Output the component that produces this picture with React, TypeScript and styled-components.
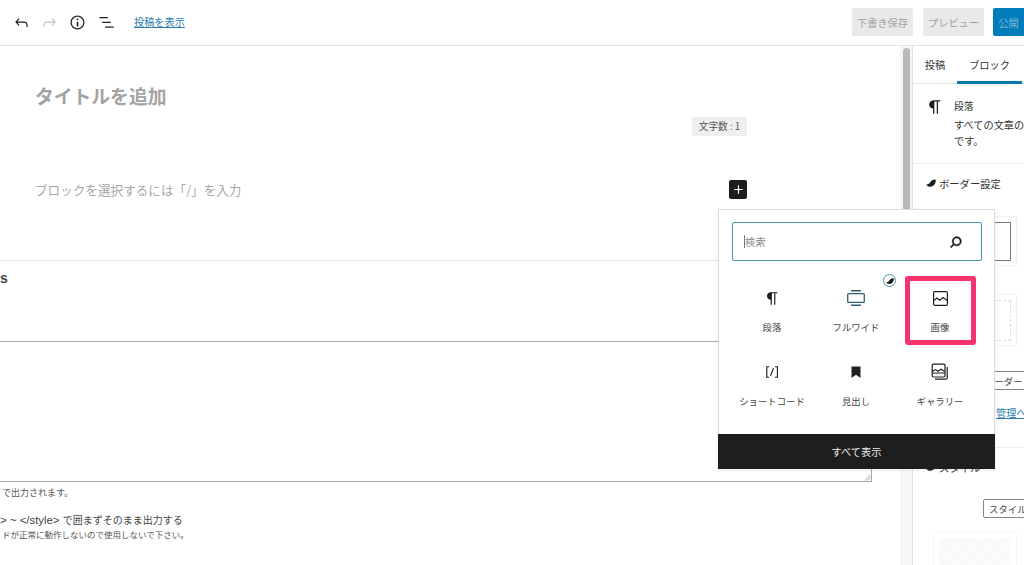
import React from "react";
import styled, { createGlobalStyle } from "styled-components";

const Global = createGlobalStyle`
  html, body { margin: 0; padding: 0; width: 1024px; height: 565px; overflow: hidden; background: #fff; }
  *, *::before, *::after { box-sizing: border-box; }
  body { font-family: "Noto Sans CJK JP", "Liberation Sans", sans-serif; color: #1e1e1e; }
`;

const Page = styled.div`
  position: relative;
  width: 1024px;
  height: 565px;
  overflow: hidden;
  display: flex;
  flex-direction: column;
`;

const Header = styled.header`
  flex: 0 0 46px;
  display: flex;
  align-items: center;
  border-bottom: 1px solid #e2e2e2;
  padding: 0 0 1px 7px;
`;
const IconSlot = styled.span<{ $faded?: boolean }>`
  width: 28.4px;
  height: 28px;
  display: flex;
  align-items: center;
  justify-content: center;
  color: ${(p) => (p.$faded ? "#c4c4c4" : "#1e1e1e")};
`;
const ViewLink = styled.a`
  margin: -2px 0 0 13.4px;
  font-size: 10.2px;
  color: #2b7cac;
  text-decoration: underline;
  flex: 1;
`;
const DraftButton = styled.span`
  width: 61px;
  height: 28px;
  margin-left: 10px;
  display: flex;
  align-items: center;
  justify-content: center;
  background: #e9e9e9;
  color: #a2a2a2;
  font-size: 10.2px;
  border-radius: 2px;
`;
const PublishButton = styled.span`
  flex: none;
  width: 61px;
  height: 28px;
  margin: 0 -30px 0 9px;
  padding-right: 30px;
  display: flex;
  align-items: center;
  justify-content: center;
  background: #007cba;
  color: #7fb6d6;
  font-size: 10.2px;
  border-radius: 2px;
`;

const Body = styled.div`
  flex: 1;
  display: flex;
  min-height: 0;
`;
const Editor = styled.main`
  width: 900px;
  flex: none;
  display: flex;
  flex-direction: column;
`;
const Canvas = styled.div`
  height: 215px;
  flex: none;
  display: flex;
  flex-direction: column;
  padding: 36px 153px 0 35px;
  border-bottom: 1px solid #e4e4e4;
`;
const PostTitle = styled.h1`
  margin: 0;
  height: 28px;
  font-size: 18.8px;
  line-height: 28px;
  font-weight: 700;
  color: #a3a3a3;
`;
const CounterRow = styled.div`
  display: flex;
  justify-content: flex-end;
  margin-top: 7px;
`;
const Counter = styled.span`
  width: 55px;
  height: 19px;
  background: #efefef;
  color: #555;
  font-size: 9.7px;
  line-height: 19px;
  text-align: center;
`;
const PlaceholderRow = styled.div`
  display: flex;
  align-items: center;
  justify-content: space-between;
  margin-top: 44px;
  height: 19px;
`;
const Placeholder = styled.span`
  font-size: 12.6px;
  color: #a6a6a6;
`;
const PlusButton = styled.span`
  width: 18px;
  height: 19px;
  background: #1e1e1e;
  color: #fff;
  border-radius: 2px;
  display: flex;
  align-items: center;
  justify-content: center;
`;
const FieldBox = styled.div`
  height: 80px;
  flex: none;
  padding-top: 7px;
`;
const FieldLabel = styled.div`
  font-family: "Liberation Sans", sans-serif;
  font-size: 14px;
  line-height: 20px;
  font-weight: 700;
  color: #444;
`;
const CodeArea = styled.div`
  position: relative;
  flex: none;
  width: 875px;
  height: 141px;
  margin-left: -3px;
  border: 1px solid #a9a9a9;
  border-left: 0;
`;
const Handle = styled.svg`
  position: absolute;
  right: 0;
  bottom: 0;
`;
const HelpOne = styled.p`
  margin: 4px 0 0 2px;
  font-size: 9px;
  line-height: 13px;
  color: #555;
`;
const HelpTwo = styled.p`
  margin: 13px 0 0;
  font-size: 10px;
  line-height: 16px;
  color: #444;
  white-space: nowrap;
`;
const LatinPart = styled.span`
  font-family: "Liberation Sans", sans-serif;
  font-size: 11.4px;
`;
const HelpThree = styled.p`
  margin: 0 0 0 2px;
  font-size: 8.5px;
  line-height: 13px;
  color: #555;
  white-space: nowrap;
`;

const Track = styled.div`
  width: 12px;
  flex: none;
  background: #f6f6f6;
  padding: 2px 2px 0 3px;
`;
const Thumb = styled.div`
  height: 350px;
  background: #b9b9b9;
  border-radius: 4px;
`;

const Sidebar = styled.aside`
  flex: 1;
  min-width: 0;
  border-left: 1px solid #e0e0e0;
  overflow: hidden;
`;
const Tabs = styled.div`
  height: 38px;
  display: flex;
  border-bottom: 1px solid #e4e4e4;
`;
const Tab = styled.span<{ $active?: boolean }>`
  width: ${(p) => (p.$active ? "65px" : "44px")};
  height: 38px;
  display: flex;
  align-items: center;
  justify-content: center;
  font-size: 10.2px;
  color: #333;
  border-bottom: 3px solid ${(p) => (p.$active ? "#0a78a8" : "transparent")};
  padding-top: 1px;
`;
const BlockCard = styled.section`
  height: 80px;
  display: flex;
  padding: 12px 0 0 12px;
  border-bottom: 1px solid #eee;
`;
const BlockIcon = styled.span`
  width: 21px;
  flex: none;
  margin-top: 1px;
`;
const BlockText = styled.div`
  margin-left: 8px;
  white-space: nowrap;
`;
const BlockName = styled.div`
  font-size: 9.8px;
  line-height: 20px;
  color: #333;
`;
const BlockDescription = styled.div`
  margin-top: 1px;
  font-size: 10.2px;
  line-height: 15.5px;
  color: #333;
`;
const Panel = styled.section<{ $height: number }>`
  height: ${(p) => p.$height}px;
  border-bottom: 1px solid #eee;
  padding-top: 11px;
`;
const PanelTitle = styled.div`
  display: flex;
  align-items: center;
  gap: 3px;
  padding-left: 13px;
  height: 16px;
  font-size: 10.3px;
  color: #333;
  white-space: nowrap;
`;
const PreviewCard = styled.div`
  margin: 25px 0 0 20px;
  width: 84px;
  height: 50px;
  border: 1px solid #f0f0f0;
  padding: 5px 5px 4px 0;
`;
const PreviewInner = styled.div`
  height: 100%;
  border: 1px solid #777;
`;
const DashedCard = styled(PreviewCard)`
  margin-top: 28px;
  height: 52px;
`;
const DashedInner = styled.div`
  height: 100%;
  border: 1px dashed #ddd;
`;
const SmallButton = styled.span`
  display: flex;
  align-items: center;
  width: 90px;
  height: 19px;
  margin-left: 58px;
  padding-left: 13px;
  border: 1px solid #888;
  border-radius: 2px;
  font-size: 9.4px;
  color: #444;
  white-space: nowrap;
`;
const BorderButton = styled(SmallButton)`
  margin-top: 25px;
`;
const ManageLink = styled.a`
  display: block;
  margin: 15px 0 0 83px;
  font-size: 10.2px;
  line-height: 16px;
  color: #2b7cac;
  text-decoration: underline;
  white-space: nowrap;
`;
const StyleButton = styled(SmallButton)`
  margin: 24px 0 0 70px;
  padding-left: 5px;
`;
const HatchCard = styled.div`
  margin: 14px 0 0 20px;
  width: 84px;
  height: 60px;
  border: 1px solid #f6f6f6;
  padding: 5px;
`;
const Hatch = styled.div`
  height: 100%;
  background: repeating-linear-gradient(135deg, #f6f6f6 0 1px, #fcfcfc 1px 3px);
`;

const Inserter = styled.div`
  position: absolute;
  left: 718px;
  top: 209px;
  width: 277px;
  height: 260px;
  background: #fff;
  border: 1px solid #dcdcdc;
  border-bottom: 0;
  box-shadow: 0 1px 3px rgba(0, 0, 0, 0.08);
  display: flex;
  flex-direction: column;
`;
const SearchBox = styled.div`
  margin: 12px 12px 0 13px;
  height: 39px;
  flex: none;
  border: 1.5px solid #4a93ae;
  border-radius: 2px;
  display: flex;
  align-items: center;
  justify-content: space-between;
  padding: 0 16px 0 11px;
  font-size: 10.2px;
  color: #8a8a8a;
`;
const Caret = styled.span`
  border-left: 1px solid #777;
  line-height: 13px;
`;
const BoldSearch = styled.svg`
  stroke: currentColor;
  stroke-width: 0.9;
  color: #1e1e1e;
`;
const BlockGrid = styled.div`
  position: relative;
  flex: 1;
  display: grid;
  grid-template-columns: repeat(3, 84px);
  grid-auto-rows: 74px;
  align-content: start;
  padding: 15px 0 0 11px;
`;
const BlockItem = styled.div<{ $highlight?: boolean }>`
  position: relative;
  display: flex;
  flex-direction: column;
  align-items: center;
  padding-top: 12px;
  &::after {
    content: "";
    display: ${(p) => (p.$highlight ? "block" : "none")};
    position: absolute;
    left: 7px;
    top: 0;
    width: 71px;
    height: 69px;
    border: 5px solid #f6336f;
    border-radius: 3px;
  }
`;
const BlockGlyph = styled.span<{ $color?: string }>`
  width: 20px;
  height: 20px;
  display: flex;
  align-items: center;
  justify-content: center;
  color: ${(p) => p.$color || "#1e1e1e"};
`;
const BlockLabel = styled.span`
  margin-top: 12px;
  font-size: 9.4px;
  line-height: 14px;
  color: #444;
  white-space: nowrap;
`;
const Badge = styled.span`
  position: absolute;
  left: 164px;
  top: 13px;
  width: 13px;
  height: 13px;
  border-radius: 50%;
  border: 1.5px solid #4a8eaa;
  background: #fff;
  display: flex;
  align-items: center;
  justify-content: center;
`;
const ShowAll = styled.div`
  height: 35px;
  flex: none;
  margin: 0 -1px;
  background: #1e1e1e;
  color: #eee;
  font-size: 10.2px;
  display: flex;
  align-items: center;
  justify-content: center;
`;

const Ico = ({ d, size = 19 }: { d: string; size?: number }) => (
  <svg width={size} height={size} viewBox="0 0 24 24" fill="currentColor">
    <path d={d} />
  </svg>
);
const Leaf = ({ size = 10 }: { size?: number }) => (
  <svg width={size} height={size} viewBox="0 0 12 12" fill="#1e1e1e">
    <path d="M0.3 8C3 8 4 6.6 5.5 4.6 7 2.6 9.5 1.6 11.6 2 12.2 6.6 9 10.6 5 10.6 3 10.6 1.3 9.5.3 8z" />
  </svg>
);

const P = {
  undo: "M18.3 11.7c-.6-.6-1.4-.9-2.3-.9H6.7l2.9-3.3-1.1-1-4.5 5L8.5 16l1-1-2.7-2.7H16c.5 0 .9.2 1.3.5 1 1 1 3.4 1 4.5v.3h1.5v-.2c0-1.5 0-4.3-1.5-5.7z",
  redo: "M15.6 6.5l-1.1 1 2.9 3.3H8c-.9 0-1.7.3-2.3.9-1.4 1.5-1.4 4.2-1.4 5.6v.2h1.5v-.3c0-1.1 0-3.5 1-4.5.3-.3.7-.5 1.3-.5h9.2L14.5 15l1.1 1.1 4.6-4.6-4.6-5z",
  info: "M12 3.2c-4.8 0-8.8 3.9-8.8 8.8 0 4.8 3.9 8.8 8.8 8.8 4.8 0 8.8-3.9 8.8-8.8 0-4.8-4-8.8-8.8-8.8zm0 16c-4 0-7.2-3.3-7.2-7.2C4.8 8 8 4.8 12 4.8s7.2 3.3 7.2 7.2c0 4-3.2 7.2-7.2 7.2zM11 17h2v-6h-2v6zm0-8h2V7h-2v2z",
  list: "M13.8 5.2H3v1.5h10.8V5.2zm-3.6 12v1.5H21v-1.5H10.2zm7.2-6H6.6v1.5h10.8v-1.5z",
  para: "M18.3 4H9.9v-.1l-.9.2c-2.3.4-4 2.4-4 4.8s1.7 4.4 4 4.8l.7.1V20h1.5V5.5h2.9V20h1.5V5.5h2.7V4z",
  search: "M13 5c-3.3 0-6 2.7-6 6 0 1.4.5 2.7 1.3 3.7l-3.8 3.8 1.1 1.1 3.8-3.8c1 .8 2.3 1.3 3.7 1.3 3.3 0 6-2.7 6-6S16.3 5 13 5zm0 10.5c-2.5 0-4.5-2-4.5-4.5s2-4.5 4.5-4.5 4.5 2 4.5 4.5-2 4.5-4.5 4.5z",
  plus: "M18 11.2h-5.2V6h-1.6v5.2H6v1.6h5.2V18h1.6v-5.2H18z",
  short: "M16 4.2v1.5h2.5v12.5H16v1.5h4V4.2h-4zM4.2 19.8h4v-1.5H5.8V5.8h2.5V4.2h-4l-.1 15.6zm5.1-3.1l1.4.6 4-10-1.4-.6-4 10z",
  mark: "M6 4.5h12V20l-6-4.2L6 20z",
};

const WideIcon = () => (
  <svg width="20" height="20" viewBox="0 0 20 20" fill="none" stroke="currentColor" strokeWidth="1.3">
    <rect x="1.7" y="5.6" width="16.6" height="8.8" rx="1" />
    <path d="M5 2.8h10M5 17.2h10" strokeWidth="1.6" />
  </svg>
);
const ImageIcon = () => (
  <svg width="17" height="17" viewBox="0 0 17 17" fill="none" stroke="currentColor" strokeWidth="1.2">
    <rect x="1.6" y="1.6" width="13.8" height="13.8" rx="1.2" />
    <path d="M1.8 10.6l3-2.6 3 2.2 3.2-2.6 4.2 3" />
  </svg>
);
const GalleryIcon = () => (
  <svg width="18" height="18" viewBox="0 0 18 18" fill="none" stroke="currentColor" strokeWidth="1.2">
    <rect x="1.2" y="1.2" width="12.8" height="12.8" rx="1.2" />
    <path d="M1.4 8.6l3-2 2.6 1.6 3-2 3.8 2.4M1.4 10h12.4" />
    <path d="M16.2 4v11c0 .7-.5 1.2-1.2 1.2H4" />
  </svg>
);

export default function App() {
  return (
    <Page>
      <Global />
      <Header>
        <IconSlot><Ico d={P.undo} /></IconSlot>
        <IconSlot $faded><Ico d={P.redo} /></IconSlot>
        <IconSlot><Ico d={P.info} /></IconSlot>
        <IconSlot><Ico d={P.list} /></IconSlot>
        <ViewLink>投稿を表示</ViewLink>
        <DraftButton>下書き保存</DraftButton>
        <DraftButton>プレビュー</DraftButton>
        <PublishButton>公開</PublishButton>
      </Header>
      <Body>
        <Editor>
          <Canvas>
            <PostTitle>タイトルを追加</PostTitle>
            <CounterRow><Counter>文字数 : 1</Counter></CounterRow>
            <PlaceholderRow>
              <Placeholder>ブロックを選択するには「/」を入力</Placeholder>
              <PlusButton><Ico d={P.plus} size={17} /></PlusButton>
            </PlaceholderRow>
          </Canvas>
          <FieldBox><FieldLabel>s</FieldLabel></FieldBox>
          <CodeArea>
            <Handle width="7" height="7" viewBox="0 0 7 7" stroke="#888" strokeWidth="0.8">
              <path d="M1 6.5L6.5 1M3.5 6.5L6.5 3.5" />
            </Handle>
          </CodeArea>
          <HelpOne>で出力されます。</HelpOne>
          <HelpTwo><LatinPart>&gt; ~ &lt;/style&gt; </LatinPart>で囲まずそのまま出力する</HelpTwo>
          <HelpThree>ドが正常に動作しないので使用しないで下さい。</HelpThree>
        </Editor>
        <Track><Thumb /></Track>
        <Sidebar>
          <Tabs>
            <Tab>投稿</Tab>
            <Tab $active>ブロック</Tab>
          </Tabs>
          <BlockCard>
            <BlockIcon><Ico d={P.para} size={20} /></BlockIcon>
            <BlockText>
              <BlockName>段落</BlockName>
              <BlockDescription>すべての文章の基本<br />です。</BlockDescription>
            </BlockText>
          </BlockCard>
          <Panel $height={284}>
            <PanelTitle><Leaf />ボーダー設定</PanelTitle>
            <PreviewCard><PreviewInner /></PreviewCard>
            <DashedCard><DashedInner /></DashedCard>
            <BorderButton>ボーダー</BorderButton>
            <ManageLink>管理へ</ManageLink>
          </Panel>
          <Panel $height={130}>
            <PanelTitle><Leaf />スタイル</PanelTitle>
            <StyleButton>スタイル</StyleButton>
            <HatchCard><Hatch /></HatchCard>
          </Panel>
        </Sidebar>
      </Body>
      <Inserter>
        <SearchBox>
          <Caret>検索</Caret>
          <BoldSearch width="18" height="18" viewBox="0 0 24 24" fill="currentColor">
            <path d={P.search} />
          </BoldSearch>
        </SearchBox>
        <BlockGrid>
          <BlockItem>
            <BlockGlyph><Ico d={P.para} size={19} /></BlockGlyph>
            <BlockLabel>段落</BlockLabel>
          </BlockItem>
          <BlockItem>
            <BlockGlyph $color="#2d5f75"><WideIcon /></BlockGlyph>
            <BlockLabel>フルワイド</BlockLabel>
          </BlockItem>
          <BlockItem $highlight>
            <BlockGlyph><ImageIcon /></BlockGlyph>
            <BlockLabel>画像</BlockLabel>
          </BlockItem>
          <BlockItem>
            <BlockGlyph><Ico d={P.short} size={18} /></BlockGlyph>
            <BlockLabel>ショートコード</BlockLabel>
          </BlockItem>
          <BlockItem>
            <BlockGlyph><Ico d={P.mark} size={18} /></BlockGlyph>
            <BlockLabel>見出し</BlockLabel>
          </BlockItem>
          <BlockItem>
            <BlockGlyph><GalleryIcon /></BlockGlyph>
            <BlockLabel>ギャラリー</BlockLabel>
          </BlockItem>
          <Badge><Leaf size={8} /></Badge>
        </BlockGrid>
        <ShowAll>すべて表示</ShowAll>
      </Inserter>
    </Page>
  );
}
